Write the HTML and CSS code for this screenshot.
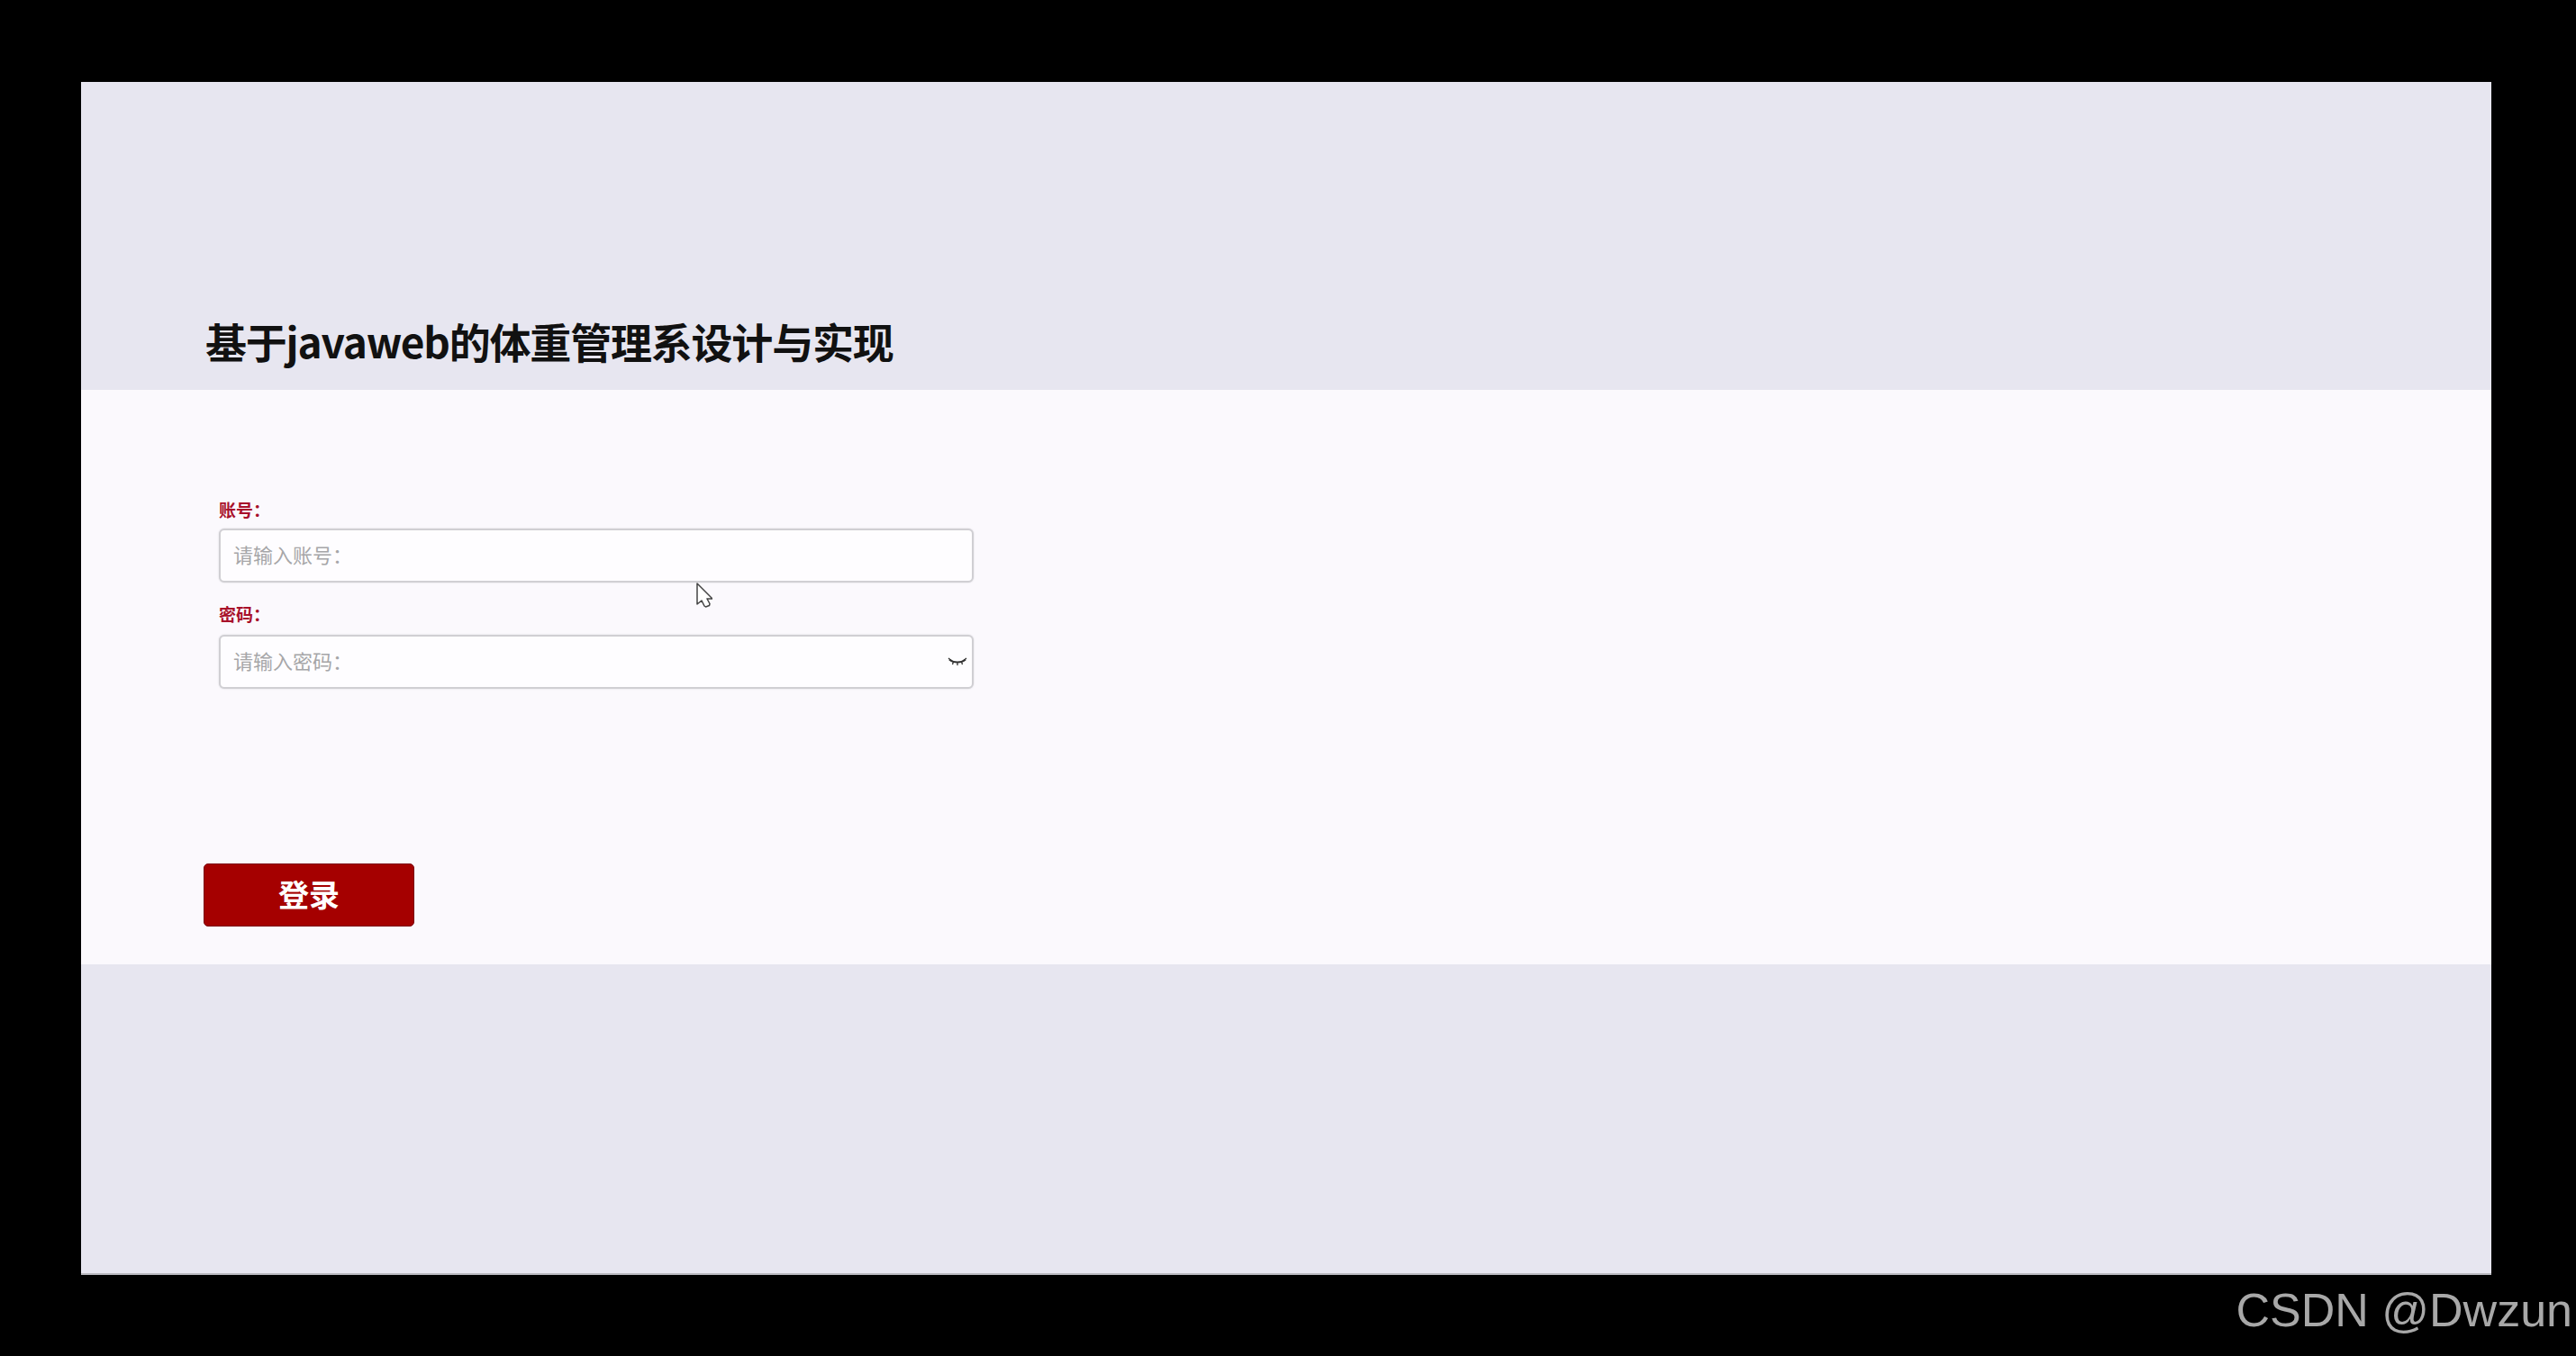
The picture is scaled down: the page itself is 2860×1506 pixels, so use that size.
FILE: index.html
```html
<!DOCTYPE html>
<html lang="zh-CN">
<head>
  <meta charset="UTF-8" />
  <title>基于javaweb的体重管理系设计与实现</title>
  <link rel="stylesheet" href="styles.css">
</head>
<body>

<div class="panel">
  <header class="head">
    <h1>基于javaweb的体重管理系设计与实现</h1>
  </header>

  <main class="band">
    <form class="fields">
      <label class="field-label">账号：</label>
      <div class="field">
        <span class="hint">请输入账号：</span>
      </div>
      <label class="field-label second">密码：</label>
      <div class="field">
        <span class="hint">请输入密码：</span>
        <svg class="eye" viewBox="0 0 22 10" width="22" height="10">
          <path d="M2 2.5C7 6.5 15 6.5 20 2.5" fill="none" stroke="#333" stroke-width="2"/>
          <path d="M1 1l3 2.5M6.500 5l-1 3M11 6v3M15.500 5l1 3M21 1l-3 2.500" fill="none" stroke="#333" stroke-width="1.300"/>
        </svg>
      </div>
    </form>
    <button class="login" type="button">登录</button>
  </main>

  <div class="foot"></div>
</div>

<div class="mark">CSDN @Dwzun</div>

<!-- mouse pointer caught in the recording -->
<svg class="pointer" viewBox="0 0 18 28" width="18" height="28">
  <path d="M1 1v23l5-4 3 6 1.500 1 4-1.500 .5-2-3-5.500h6z" fill="#fff" stroke="#444" stroke-width="1.500" stroke-linejoin="round"/>
</svg>

</body>
</html>
```

FILE: styles.css
```css
body {
  margin: 0;
  height: 1506px;
  overflow: hidden;
  background-color: #000;
  font-family: "Noto Sans CJK SC", "Noto Sans", sans-serif;
  display: flex;
  flex-direction: column;
  padding-top: 91px;
  box-sizing: border-box;
}
.panel {
  width: 2676px;
  margin-left: 90px;
  background-color: #e7e6f0;
  border-bottom: 2px solid #b9b9bf;
}
.head {
  height: 342px;
  padding: 0 0 26px 138px;
  box-sizing: border-box;
  display: flex;
  align-items: flex-end;
}
h1 {
  margin: 0;
  font-size: 46px;
  line-height: 58px;
  font-weight: 700;
  letter-spacing: -1.200px;
  color: #111;
}
.band {
  height: 638px;
  padding: 120px 0 0 136px;
  box-sizing: border-box;
  background-color: #fbf9fd;
  display: flex;
  flex-direction: column;
  align-items: flex-start;
}
.fields {
  margin-left: 17px;
  width: 838px;
}
.field-label {
  display: block;
  height: 34px;
  font-size: 19px;
  line-height: 26px;
  font-weight: 700;
  color: #a8102a;
}
.field-label.second {
  height: 36px;
  margin-top: 22px;
}
.field {
  height: 60px;
  padding: 0 14px 0 14px;
  box-sizing: border-box;
  border: 2px solid #d0cfd3;
  border-radius: 6px;
  box-shadow: 0 0 2px #d8d7db;
  background-color: #fefdff;
  display: flex;
  align-items: center;
  justify-content: space-between;
}
.hint {
  font-size: 22px;
  line-height: 28px;
  margin-top: -4px;
  color: #a6a6a8;
}
.eye {
  margin-right: -9px;
}
.login {
  margin-top: 194px;
  width: 234px;
  height: 70px;
  padding-bottom: 4px;
  border: 1px solid #7a0008;
  border-radius: 5px;
  background-color: #a50000;
  color: #fff;
  font-family: inherit;
  font-size: 34px;
  font-weight: 700;
}
.foot {
  height: 343px;
}
.mark {
  padding-right: 4px;
  margin-top: 10px;
  text-align: right;
  font-family: "Liberation Sans", Arial, sans-serif;
  font-size: 52px;
  line-height: 58px;
  color: #a8a8a8;
}
.pointer {
  position: absolute;
  left: 773px;
  top: 647px;
}
```
